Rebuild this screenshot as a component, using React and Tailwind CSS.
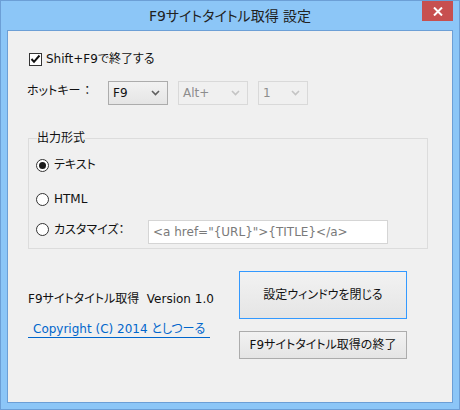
import React from "react";

const font = {
  fontFamily: '"DejaVu Sans", "Noto Sans CJK JP", sans-serif',
  fontFeatureSettings: '"palt"',
};

function Chevron({ color = "#5f5f5f" }) {
  return (
    <svg width="9" height="6" viewBox="0 0 9 6" className="shrink-0">
      <path d="M1 1 L4.5 4.5 L8 1" fill="none" stroke={color} strokeWidth="1.6" />
    </svg>
  );
}

function Select({ value, width, disabled }) {
  return (
    <div
      className={
        "flex h-[24px] items-center justify-between border pl-[4px] pr-[7px] text-[12px] " +
        (disabled
          ? "border-[#d9d9d9] bg-[#f0f0f0] text-[#8d8d8d]"
          : "border-[#acacac] bg-gradient-to-b from-[#f2f2f2] to-[#e5e5e5] text-[#111]")
      }
      style={{ width }}
    >
      <span>{value}</span>
      <Chevron color={disabled ? "#c4c4c4" : "#5f5f5f"} />
    </div>
  );
}

function Radio({ checked }) {
  return (
    <span className="flex h-[13px] w-[13px] shrink-0 items-center justify-center rounded-full border border-[#333] bg-white">
      {checked && <span className="h-[7px] w-[7px] rounded-full bg-[#1a1a1a]" />}
    </span>
  );
}

export default function App() {
  return (
    <div
      className="flex h-[410px] w-[460px] flex-col border border-[#6c9fd6] bg-[#8cc6f7]"
      style={font}
    >
      {/* title bar */}
      <div className="relative flex h-[29px] items-center justify-center">
        <span className="mt-[2px] text-[14px] text-[#222]">F9サイトタイトル取得 設定</span>
        <div className="absolute right-[6px] top-0 flex h-[20px] w-[31px] items-center justify-center bg-[#c75050]">
          <svg width="10" height="9" viewBox="0 0 10 9">
            <path d="M1 0.5 L9 8.5 M9 0.5 L1 8.5" stroke="#fff" strokeWidth="2" />
          </svg>
        </div>
      </div>

      {/* client area */}
      <div className="mx-[6px] flex h-[373px] flex-col border border-[#6c9fd6] bg-[#f0f0f0] pl-[20px] text-[12px] text-[#111]">
        {/* checkbox */}
        <div className="mt-[20px] flex h-[16px] items-center gap-[4px] pl-[1px]">
          <span className="flex h-[13px] w-[13px] items-center justify-center border border-[#333] bg-white">
            <svg width="11" height="10" viewBox="0 0 11 10">
              <path d="M1.5 5 L4 7.8 L9.5 1.5" fill="none" stroke="#111" strokeWidth="2" />
            </svg>
          </span>
          <span>Shift+F9で終了する</span>
        </div>

        {/* hotkey */}
        <div className="mt-[14px] flex h-[24px] items-center">
          <span className="-ml-[1px] -mt-[5px] w-[81px]">ホットキー ：</span>
          <Select value="F9" width={60} />
          <div className="ml-[10px]">
            <Select value="Alt+" width={70} disabled />
          </div>
          <div className="ml-[10px]">
            <Select value="1" width={50} disabled />
          </div>
        </div>

        {/* output format group */}
        <fieldset className="mt-[25px] w-[400px] border border-[#dcdcdc] pb-[4px] pl-[7px]">
          <legend className="ml-[1px] px-0 leading-[16px]">出力形式</legend>
          <div className="mt-[11px] flex h-[16px] items-center gap-[5px]">
            <Radio checked />
            <span>テキスト</span>
          </div>
          <div className="mt-[18px] flex h-[16px] items-center gap-[5px]">
            <Radio />
            <span>HTML</span>
          </div>
          <div className="mt-[13px] flex h-[24px] items-center">
            <div className="-mt-[5px] flex w-[112px] items-center gap-[5px]">
              <Radio />
              <span>カスタマイズ：</span>
            </div>
            <div className="flex h-[24px] w-[240px] items-center border border-[#d5d5d5] bg-white pl-[4px] text-[#7a7a7a]">
              &lt;a href="{"{URL}"}"&gt;{"{TITLE}"}&lt;/a&gt;
            </div>
          </div>
        </fieldset>

        {/* footer */}
        <div className="mt-[22px] flex">
          <div className="flex w-[211px] flex-col">
            <span className="mt-[20px] leading-[16px]">F9サイトタイトル取得&nbsp;&nbsp;Version 1.0</span>
            <span className="mt-[14px] self-start border-b border-[#0066cc] px-[5px] leading-[16px] text-[#0066cc]">
              Copyright (C) 2014 としつーる
            </span>
          </div>
          <div className="flex flex-col gap-[12px]">
            <div className="flex h-[48px] w-[168px] items-center justify-center border border-[#3399ff] bg-gradient-to-b from-[#f2f2f2] to-[#e5e5e5]">
              設定ウィンドウを閉じる
            </div>
            <div className="flex h-[28px] w-[168px] items-center justify-center border border-[#acacac] bg-gradient-to-b from-[#f2f2f2] to-[#e5e5e5]">
              F9サイトタイトル取得の終了
            </div>
          </div>
        </div>
      </div>
    </div>
  );
}
